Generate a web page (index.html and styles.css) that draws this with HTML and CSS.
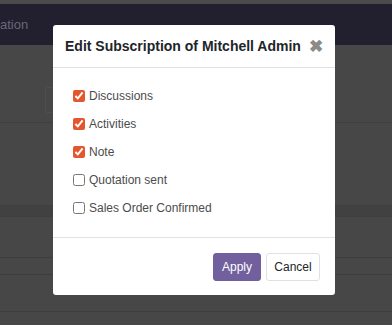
FILE: index.html
```html
<!DOCTYPE html>
<html lang="en">
<head>
    <meta charset="UTF-8">
    <title>Edit Subscription</title>
    <link rel="stylesheet" href="styles.css">
</head>
<body>
    <!-- page behind the dialog -->
    <div class="page">
        <div class="top-strip"></div>
        <div class="navbar">ation</div>
        <div class="control-panel">
            <div class="search-box"></div>
        </div>
        <div class="list-area">
            <div class="band"></div>
            <div class="row r1"></div>
            <div class="row r2"></div>
            <div class="row r3"></div>
        </div>
    </div>

    <!-- dialog -->
    <div class="modal">
        <div class="modal-header">
            <h4>Edit Subscription of Mitchell Admin</h4>
            <span class="close">&#10006;</span>
        </div>
        <div class="modal-body">
            <label class="check"><input type="checkbox" checked> Discussions</label>
            <label class="check"><input type="checkbox" checked> Activities</label>
            <label class="check"><input type="checkbox" checked> Note</label>
            <label class="check"><input type="checkbox"> Quotation sent</label>
            <label class="check"><input type="checkbox"> Sales Order Confirmed</label>
        </div>
        <div class="modal-footer">
            <button class="btn btn-primary">Apply</button>
            <button class="btn btn-secondary">Cancel</button>
        </div>
    </div>
</body>
</html>
```

FILE: styles.css
```css
* {
    margin: 0;
    padding: 0;
    box-sizing: border-box;
}

body {
    font-family: "Liberation Sans", Arial, sans-serif;
    background: #474747;
    width: 392px;
    height: 325px;
    overflow: hidden;
}

.top-strip {
    height: 4px;
    background: #4b4b4b;
}

.navbar {
    height: 41px;
    background: #221f2f;
    color: #6a6776;
    font-size: 13px;
    line-height: 41px;
}

.control-panel {
    height: 78px;
    padding-top: 42px;
    border-bottom: 1px solid #3f3f3f;
}

.search-box {
    width: 60px;
    height: 26px;
    margin-left: 45px;
    border: 1px solid #4f4f4f;
    border-radius: 2px;
}

.list-area {
    padding-top: 82px;
}

.band {
    height: 12px;
    background: #414141;
    border-top: 1px solid #3f3f3f;
    border-bottom: 1px solid #3f3f3f;
}

.row {
    border-bottom: 1px solid #3d3d3d;
}

.r1 { height: 41px; }
.r2 { height: 17px; }
.r3 { height: 37px; }

/* dialog */
.modal {
    position: absolute;
    top: 25px;
    left: 53px;
    width: 282px;
    height: 270px;
    background: #fff;
    border-radius: 3px;
    display: flex;
    flex-direction: column;
}

.modal-header {
    height: 43px;
    display: flex;
    align-items: center;
    justify-content: space-between;
    padding: 0 12px 0 12px;
    border-bottom: 1px solid #dee2e6;
}

.modal-header h4 {
    font-size: 14px;
    font-weight: bold;
    color: #212529;
    white-space: nowrap;
}

.close {
    color: #8a8a8a;
    font-size: 17px;
    font-weight: bold;
    line-height: 1;
}

.modal-body {
    height: 170px;
    padding: 14px 20px 0 20px;
    border-bottom: 1px solid #dee2e6;
}

.check {
    display: flex;
    align-items: center;
    height: 28px;
    font-size: 12px;
    color: #4c4c4c;
}

.check input {
    width: 12px;
    height: 12px;
    margin: 0 4px 0 0;
    accent-color: #e4572e;
}

.modal-footer {
    flex: 1;
    display: flex;
    justify-content: flex-end;
    align-items: center;
    gap: 5px;
    padding: 0 15px 0 0;
}

.btn {
    height: 28px;
    font-family: inherit;
    font-size: 12px;
    border-radius: 3px;
    padding: 0;
    cursor: pointer;
}

.btn-primary {
    background: #715f9e;
    border: 1px solid #715f9e;
    color: #fff;
    width: 48px;
}

.btn-secondary {
    background: #fff;
    border: 1px solid #dee2e6;
    color: #212529;
    width: 54px;
}
```
